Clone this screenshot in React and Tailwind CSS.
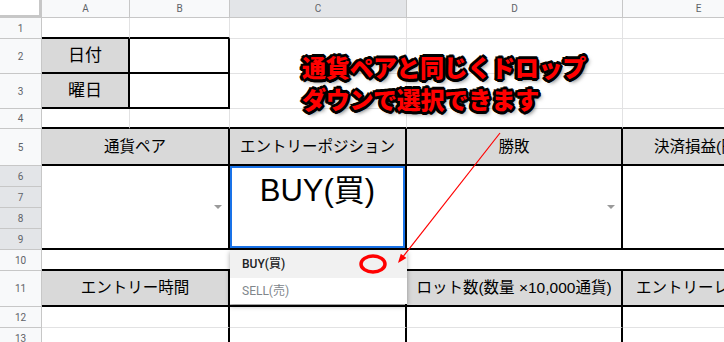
import React from 'react'

// border helper: 'thick' = black 2px, 'grid' = light gridline, 'none' = nothing
function edge(r, b) {
  const rc = r === 'thick' ? 'border-r-2 border-r-black' : r === 'none' ? '' : 'border-r border-r-[#e2e2e3]'
  const bc = b === 'thick' ? 'border-b-2 border-b-black' : b === 'none' ? '' : 'border-b border-b-[#e2e2e3]'
  return `${rc} ${bc}`
}

function Cell({ r, b, gray, className = '', children }) {
  return (
    <div
      className={`flex items-center justify-center overflow-hidden whitespace-nowrap text-black ${edge(r, b)} ${
        gray ? 'bg-[#d9d9d9]' : 'bg-white'
      } ${className}`}
    >
      {children}
    </div>
  )
}

function ColHead({ children, active }) {
  return (
    <div
      className={`flex items-center justify-center text-[10px] text-[#5f6368] font-['Roboto',sans-serif] border-r border-b border-[#c7c7c7] ${
        active ? 'bg-[#e3e5e8]' : 'bg-[#f8f9fa]'
      }`}
    >
      {children}
    </div>
  )
}

function RowHead({ n, active }) {
  return (
    <div
      className={`flex items-center justify-center text-[10px] text-[#5f6368] font-['Roboto',sans-serif] border-r border-b border-[#c7c7c7] ${
        active ? 'bg-[#e3e5e8]' : 'bg-[#f8f9fa]'
      }`}
    >
      {n}
    </div>
  )
}

function Caret() {
  return <div className="w-0 h-0 border-l-[4px] border-r-[4px] border-t-[4px] border-l-transparent border-r-transparent border-t-[#9a9a9a]" />
}

export default function App() {
  return (
    <div className="relative w-[724px] h-[342px] overflow-hidden bg-white font-['Liberation_Sans','Noto_Sans_CJK_JP',sans-serif]">
      <div className="grid w-[775px] grid-cols-[42px_88px_100px_177px_216px_152px] grid-rows-[18px_21px_35px_35px_20px_37px_21px_21px_21px_21px_21px_36px_21px_21px]">
        {/* column headers */}
        <div className="bg-white border-r-[3px] border-b-[3px] border-[#c7c7c7]" />
        <ColHead>A</ColHead>
        <ColHead>B</ColHead>
        <ColHead active>C</ColHead>
        <ColHead>D</ColHead>
        <ColHead>E</ColHead>

        {/* row 1 */}
        <RowHead n={1} />
        <Cell r="grid" b="thick" />
        <Cell r="grid" b="thick" />
        <Cell />
        <Cell />
        <Cell />

        {/* row 2 */}
        <RowHead n={2} />
        <Cell r="thick" b="thick" gray className="text-[17px]">日付</Cell>
        <Cell r="thick" b="thick" />
        <Cell />
        <Cell />
        <Cell />

        {/* row 3 */}
        <RowHead n={3} />
        <Cell r="thick" b="thick" gray className="text-[17px]">曜日</Cell>
        <Cell r="thick" b="thick" />
        <Cell />
        <Cell />
        <Cell />

        {/* row 4 */}
        <RowHead n={4} />
        <Cell b="thick" />
        <Cell b="thick" />
        <Cell b="thick" />
        <Cell b="thick" />
        <Cell b="thick" />

        {/* row 5 */}
        <RowHead n={5} />
        <Cell r="thick" b="thick" gray className="col-span-2 text-[15.5px]">通貨ペア</Cell>
        <Cell r="thick" b="thick" gray className="text-[15.5px]">エントリーポジション</Cell>
        <Cell r="thick" b="thick" gray className="text-[15.5px]">勝敗</Cell>
        <Cell r="thick" b="thick" gray className="text-[15.5px]">決済損益(円)</Cell>

        {/* rows 6-9 */}
        <RowHead n={6} active />
        <Cell r="thick" b="thick" className="col-span-2 row-span-4 justify-end pr-[6px]">
          <Caret />
        </Cell>
        <Cell r="thick" b="thick" className="row-span-4 items-stretch">
          <div className="flex-1 flex justify-center pt-[5px] border-2 border-[#1a73e8]">
            <span className="text-[31px] leading-[36px]">BUY(買)</span>
          </div>
        </Cell>
        <Cell r="thick" b="thick" className="row-span-4 justify-end pr-[6px]">
          <Caret />
        </Cell>
        <Cell r="thick" b="thick" className="row-span-4" />
        <RowHead n={7} active />
        <RowHead n={8} active />
        <RowHead n={9} active />

        {/* row 10 */}
        <RowHead n={10} />
        <Cell r="none" b="thick" className="col-span-5" />

        {/* row 11 */}
        <RowHead n={11} />
        <Cell r="thick" b="thick" gray className="col-span-2 text-[15.5px]">エントリー時間</Cell>
        <Cell r="thick" b="thick" gray />
        <Cell r="thick" b="thick" gray className="text-[15.5px]">ロット数(数量 ×10,000通貨)</Cell>
        <Cell r="thick" b="thick" gray className="text-[15.5px]">エントリーレート</Cell>

        {/* rows 12-13 */}
        <RowHead n={12} />
        <Cell r="thick" className="col-span-2" />
        <Cell r="thick" />
        <Cell r="thick" />
        <Cell r="thick" />
        <RowHead n={13} />
        <Cell r="thick" className="col-span-2" />
        <Cell r="thick" />
        <Cell r="thick" />
        <Cell r="thick" />
      </div>

      {/* data validation dropdown */}
      <div className="absolute left-[230px] top-[250px] w-[177px] bg-white shadow-[0_2px_5px_rgba(0,0,0,0.35)] font-['Roboto','Noto_Sans_CJK_JP',sans-serif] text-[12px]">
        <div className="h-[28px] flex items-center pl-[12px] bg-[#f1f1f1] text-[#202124] font-medium">BUY(買)</div>
        <div className="h-[26px] flex items-center pl-[12px] text-[#80868b]">SELL(売)</div>
      </div>

      {/* callout */}
      <div className="absolute left-[302px] top-[51px] text-[24px] leading-[32px] font-black text-[#ff0000] whitespace-nowrap tracking-[-0.3px] font-['Noto_Sans_CJK_JP',sans-serif] [text-shadow:2.5px_0_0_#000,-2.5px_0_0_#000,0_2.5px_0_#000,0_-2.5px_0_#000,2px_2px_0_#000,-2px_-2px_0_#000,2px_-2px_0_#000,-2px_2px_0_#000,3px_1px_0_#000,-3px_1px_0_#000,1px_3px_0_#000,1px_-3px_0_#000,3px_3px_4px_rgba(0,0,0,0.6)]">
        <div>通貨ペアと同じくドロップ</div>
        <div>ダウンで選択できます</div>
      </div>

      {/* arrow + circle */}
      <svg className="absolute left-0 top-0 pointer-events-none" width="724" height="342" viewBox="0 0 724 342">
        <line x1="500" y1="133" x2="402" y2="258" stroke="#ff0000" strokeWidth="1.2" />
        <polygon points="398,263 406.4,258.1 400.8,253.7" fill="#ff0000" />
        <ellipse cx="373" cy="264" rx="12" ry="8" fill="none" stroke="#ff0000" strokeWidth="3.5" />
      </svg>
    </div>
  )
}
